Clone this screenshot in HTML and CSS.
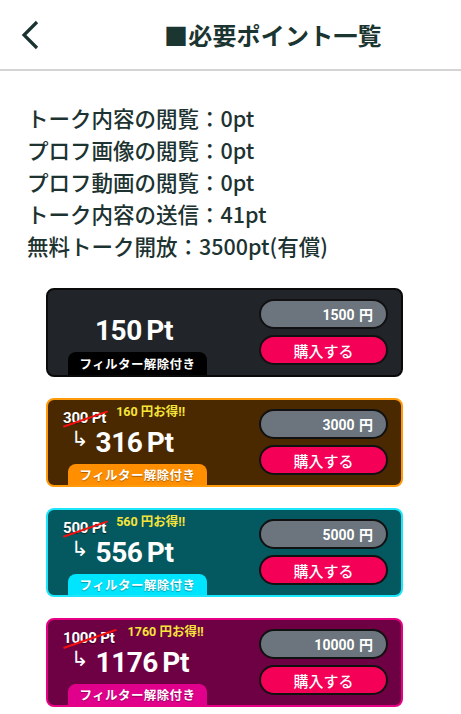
FILE: index.html
```html
<!DOCTYPE html>
<html lang="ja">
<head>
<meta charset="utf-8">
<title>必要ポイント一覧</title>
<link rel="stylesheet" href="styles.css">
</head>
<body>
<header class="header">
  <button class="back" aria-label="戻る">
    <svg width="20" height="30" viewBox="0 0 20 30"><path d="M16 2 L3 15 L16 28" fill="none" stroke="#1b3330" stroke-width="3.2"/></svg>
  </button>
  <h1 class="title">■必要ポイント一覧</h1>
</header>

<ul class="costs">
  <li>トーク内容の閲覧：0pt</li>
  <li>プロフ画像の閲覧：0pt</li>
  <li>プロフ動画の閲覧：0pt</li>
  <li>トーク内容の送信：41pt</li>
  <li>無料トーク開放：3500pt(有償)</li>
</ul>

<div class="plans">
  <div class="card card-basic">
    <div class="left">
      <div class="main main-single"><span class="pt">150 Pt</span></div>
      <div class="tag">フィルター解除付き</div>
    </div>
    <div class="right">
      <div class="price">1500 円</div>
      <button class="buy">購入する</button>
    </div>
  </div>

  <div class="card card-orange">
    <div class="left">
      <div class="top"><span class="old">300 Pt</span><span class="deal">160 円お得!!</span></div>
      <div class="main"><span class="arrow">↳</span><span class="pt">316 Pt</span></div>
      <div class="tag">フィルター解除付き</div>
    </div>
    <div class="right">
      <div class="price">3000 円</div>
      <button class="buy">購入する</button>
    </div>
  </div>

  <div class="card card-teal">
    <div class="left">
      <div class="top"><span class="old">500 Pt</span><span class="deal">560 円お得!!</span></div>
      <div class="main"><span class="arrow">↳</span><span class="pt">556 Pt</span></div>
      <div class="tag">フィルター解除付き</div>
    </div>
    <div class="right">
      <div class="price">5000 円</div>
      <button class="buy">購入する</button>
    </div>
  </div>

  <div class="card card-purple">
    <div class="left">
      <div class="top"><span class="old">1000 Pt</span><span class="deal">1760 円お得!!</span></div>
      <div class="main"><span class="arrow">↳</span><span class="pt">1176 Pt</span></div>
      <div class="tag">フィルター解除付き</div>
    </div>
    <div class="right">
      <div class="price">10000 円</div>
      <button class="buy">購入する</button>
    </div>
  </div>
</div>
</body>
</html>
```

FILE: styles.css
```css
* { box-sizing: border-box; }
html, body { margin: 0; padding: 0; background: #fff; }
body {
  font-family: "Noto Sans CJK JP", "Noto Sans", sans-serif;
  color: #1d3331;
  width: 461px;
  overflow: hidden;
}
.header {
  height: 71px;
  display: flex;
  align-items: center;
  border-bottom: 2px solid #d4d4d4;
}
.back {
  border: 0;
  background: none;
  padding: 0;
  margin: 1px 0 0 21px;
  width: 20px;
  height: 30px;
  display: flex;
}
.title {
  margin: 0 0 0 123px;
  font-size: 24px;
  font-weight: 700;
  color: #1b3531;
  letter-spacing: 0.2px;
}
.costs {
  list-style: none;
  margin: 0;
  padding: 31px 0 0 27px;
  font-size: 21.5px;
  font-weight: 500;
  line-height: 32px;
}
.plans {
  padding: 26px 0 0 46px;
  display: flex;
  flex-direction: column;
  gap: 21px;
}
.card {
  width: 357px;
  height: 89px;
  border: 2px solid #000;
  border-radius: 8px;
  display: flex;
  justify-content: space-between;
  overflow: hidden;
}
.card-basic { background: #212529; border-color: #0a0a0a; }
.card-orange { background: #4a2900; border-color: #ff9a0a; }
.card-teal { background: #045860; border-color: #1ce6fa; }
.card-purple { background: #6e0044; border-color: #e60084; }

.left {
  width: 200px;
  display: flex;
  flex-direction: column;
  justify-content: flex-end;
  padding-left: 15px;
}
.top {
  display: flex;
  align-items: flex-start;
  height: 20px;
  margin-top: 6px;
}
.old {
  position: relative;
  font-family: Roboto, "Noto Sans", sans-serif;
  font-weight: 700;
  font-size: 15px;
  line-height: 20px;
  color: #fff;
  text-shadow: 0 1px 1px rgba(0,0,0,0.6);
  margin-top: 2px;
  letter-spacing: -0.2px;
}
.old::after {
  content: "";
  position: absolute;
  left: -1px;
  right: -3px;
  top: 10px;
  height: 2px;
  background: #f01010;
  transform: rotate(-19deg);
}
.deal {
  margin-left: 10px;
  font-family: Roboto, "Noto Sans CJK JP", sans-serif;
  font-weight: 700;
  font-size: 12.5px;
  line-height: 14px;
  color: #f6e43a;
  margin-top: -1px;
}
.card-purple .deal { margin-left: 13px; }
.main {
  display: flex;
  align-items: center;
  height: 36px;
  padding-left: 8px;
}
.main-single {
  flex: 1;
  padding: 22px 0 0 32px;
}
.arrow {
  font-family: "DejaVu Sans", sans-serif;
  color: #fff;
  font-size: 21px;
  line-height: 20px;
  margin: -8px 7px 0 0;
}
.pt {
  font-family: Roboto, "Noto Sans", sans-serif;
  font-weight: 700;
  font-size: 28px;
  color: #fff;
  letter-spacing: -0.5px;
  word-spacing: -2px;
}
.tag {
  width: 139px;
  height: 23px;
  margin-left: 5px;
  margin-top: 4px;
  border-radius: 8px 8px 0 0;
  color: #fff;
  font-size: 12.5px;
  font-weight: 700;
  display: flex;
  align-items: center;
  justify-content: center;
  letter-spacing: 0.4px;
  text-shadow: 0 1px 1px rgba(0,0,0,0.35);
}
.card-basic .tag { background: #000; }
.card-orange .tag { background: #ff8f00; }
.card-teal .tag { background: #00e5ff; }
.card-purple .tag { background: #e0008c; }

.right {
  display: flex;
  flex-direction: column;
  gap: 6px;
  padding: 9px 13px 0 0;
}
.price, .buy {
  width: 129px;
  height: 30px;
  border: 2px solid #111;
  border-radius: 15px;
  color: #fff;
}
.price {
  background: #6c757d;
  font-family: Roboto, "Noto Sans CJK JP", sans-serif;
  font-weight: 700;
  font-size: 14px;
  display: flex;
  align-items: center;
  justify-content: flex-end;
  padding-right: 13px;
  word-spacing: 1px;
}
.buy {
  background: #f50057;
  font-family: "Noto Sans CJK JP", sans-serif;
  font-size: 15px;
  font-weight: 500;
  padding: 0;
  display: flex;
  align-items: center;
  justify-content: center;
}
```
